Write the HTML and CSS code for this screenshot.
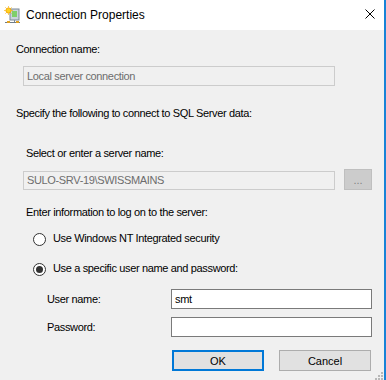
FILE: index.html
```html
<!DOCTYPE html>
<html lang="en">
<head>
    <meta charset="UTF-8">
    <meta name="viewport" content="width=device-width, initial-scale=1.0">
    <title>Connection Properties</title>
    <link rel="stylesheet" href="styles.css">
</head>
<body>
    <div class="dialog">
        <header class="titlebar">
            <svg class="title-icon" width="16" height="17" viewBox="0 0 16 17">
                <rect x="6" y="3" width="9" height="11" fill="#c9d3dc" stroke="#7d8a96"/>
                <rect x="8" y="5" width="5" height="6" fill="#7fcf6a"/>
                <line x1="10.5" y1="14" x2="10.5" y2="16" stroke="#7d8a96"/>
                <line x1="1" y1="16.5" x2="16" y2="16.5" stroke="#6f7c88"/>
                <rect x="3" y="15" width="3" height="2" fill="#e0a020"/>
                <rect x="12" y="15" width="3" height="2" fill="#e0a020"/>
                <circle cx="4.5" cy="4.5" r="2.6" fill="#ffd21f" stroke="#f29a00" stroke-width="0.8"/>
                <path d="M4.5 0.3 V1.5 M4.5 7.5 V8.7 M0.3 4.5 H1.5 M7.5 4.5 H8.7 M1.5 1.5 L2.4 2.4 M6.6 6.6 L7.5 7.5 M7.5 1.5 L6.6 2.4 M1.5 7.5 L2.4 6.6" stroke="#f5b000" stroke-width="0.9"/>
            </svg>
            <span class="title">Connection Properties</span>
            <svg class="close" width="10" height="10" viewBox="0 0 10 10">
                <path d="M0.5 0.5 L9.5 9.5 M9.5 0.5 L0.5 9.5" stroke="#000" stroke-width="1"/>
            </svg>
        </header>
        <main class="content">
            <p class="label first">Connection name:</p>
            <div class="textbox disabled name-box">Local server connection</div>

            <p class="label specify">Specify the following to connect to SQL Server data:</p>

            <p class="label indent select">Select or enter a server name:</p>
            <div class="server-row">
                <div class="textbox disabled server-box">SULO-SRV-19\SWISSMAINS</div>
                <button class="browse" disabled>...</button>
            </div>

            <p class="label indent logon">Enter information to log on to the server:</p>
            <label class="radio-row first-radio">
                <span class="radio"></span>
                <span>Use Windows NT Integrated security</span>
            </label>
            <label class="radio-row second-radio">
                <span class="radio checked"></span>
                <span>Use a specific user name and password:</span>
            </label>

            <div class="field-row user-row">
                <span class="field-label">User name:</span>
                <div class="textbox field-box">smt</div>
            </div>
            <div class="field-row pass-row">
                <span class="field-label">Password:</span>
                <div class="textbox field-box"></div>
            </div>

            <div class="buttons">
                <button class="btn btn-default">OK</button>
                <button class="btn">Cancel</button>
            </div>
        </main>
        <svg class="grip" width="8" height="8" viewBox="0 0 8 8">
            <rect x="6" y="0" width="2" height="2" fill="#b8b8b8"/>
            <rect x="3" y="3" width="2" height="2" fill="#b8b8b8"/>
            <rect x="6" y="3" width="2" height="2" fill="#b8b8b8"/>
            <rect x="0" y="6" width="2" height="2" fill="#b8b8b8"/>
            <rect x="3" y="6" width="2" height="2" fill="#b8b8b8"/>
            <rect x="6" y="6" width="2" height="2" fill="#b8b8b8"/>
        </svg>
    </div>
</body>
</html>
```

FILE: styles.css
```css
* {
    box-sizing: border-box;
}
body {
    margin: 0;
    padding: 0;
    background: #f0f0f0;
    font-family: "Liberation Sans", Arial, sans-serif;
    font-size: 11px;
    letter-spacing: -0.35px;
    color: #000;
}
.dialog {
    position: relative;
    width: 386px;
    height: 380px;
    border-right: 2px solid #1883d7;
    background: #f0f0f0;
    overflow: hidden;
}
.titlebar {
    height: 30px;
    background: #fff;
    display: flex;
    align-items: center;
    padding: 0 9px 0 4px;
}
.title-icon {
    margin-top: -1px;
}
.title {
    margin-left: 6px;
    font-size: 12px;
    letter-spacing: 0;
}
.close {
    margin-left: auto;
    margin-top: -2px;
}

.content {
    padding: 13px 0 0 16px;
}
.label {
    margin: 0;
    line-height: 13px;
}
.indent {
    margin-left: 10px;
}
.textbox {
    height: 20px;
    line-height: 18px;
    padding-left: 3px;
    border: 1px solid #7a7a7a;
    background: #fff;
}
.textbox.disabled {
    border-color: #cccccc;
    background: #f0f0f0;
    color: #6d6d6d;
}
.name-box {
    margin: 10px 0 0 7px;
    width: 312px;
}
.specify {
    margin-top: 21px;
}
.select {
    margin-top: 27px;
}
.server-row {
    margin: 9px 0 0 7px;
    display: flex;
    align-items: flex-end;
    gap: 9px;
}
.server-box {
    width: 312px;
    height: 19px;
    line-height: 17px;
}
.browse {
    width: 28px;
    height: 21px;
    padding: 0;
    border: 1px solid #bfbfbf;
    background: #cccccc;
    color: #838383;
    font-family: inherit;
    font-size: 11px;
    line-height: 21px;
}
.logon {
    margin-top: 16px;
}
.radio-row {
    display: flex;
    align-items: center;
    gap: 7px;
    margin-left: 17px;
    line-height: 13px;
}
.first-radio {
    margin-top: 12px;
}
.second-radio {
    margin-top: 15px;
}
.radio {
    width: 13px;
    height: 13px;
    margin-top: 2px;
    border: 1px solid #333;
    border-radius: 50%;
    background: #fff;
    display: flex;
    justify-content: center;
    align-items: center;
}
.radio.checked::after {
    content: "";
    width: 7px;
    height: 7px;
    border-radius: 50%;
    background: #333;
}
.field-row {
    display: flex;
    align-items: center;
    margin-left: 31px;
}
.user-row {
    margin-top: 13px;
}
.pass-row {
    margin-top: 8px;
}
.field-label {
    width: 124px;
    line-height: 13px;
}
.field-box {
    width: 201px;
}
.buttons {
    margin: 13px 0 0 156px;
    display: flex;
    gap: 15px;
}
.btn {
    width: 92px;
    height: 21px;
    padding: 0;
    border: 1px solid #adadad;
    background: #e1e1e1;
    font-family: inherit;
    font-size: 11px;
    color: #000;
}
.btn-default {
    border: 2px solid #0078d7;
}
.grip {
    position: absolute;
    right: 1px;
    bottom: 0;
}
```
